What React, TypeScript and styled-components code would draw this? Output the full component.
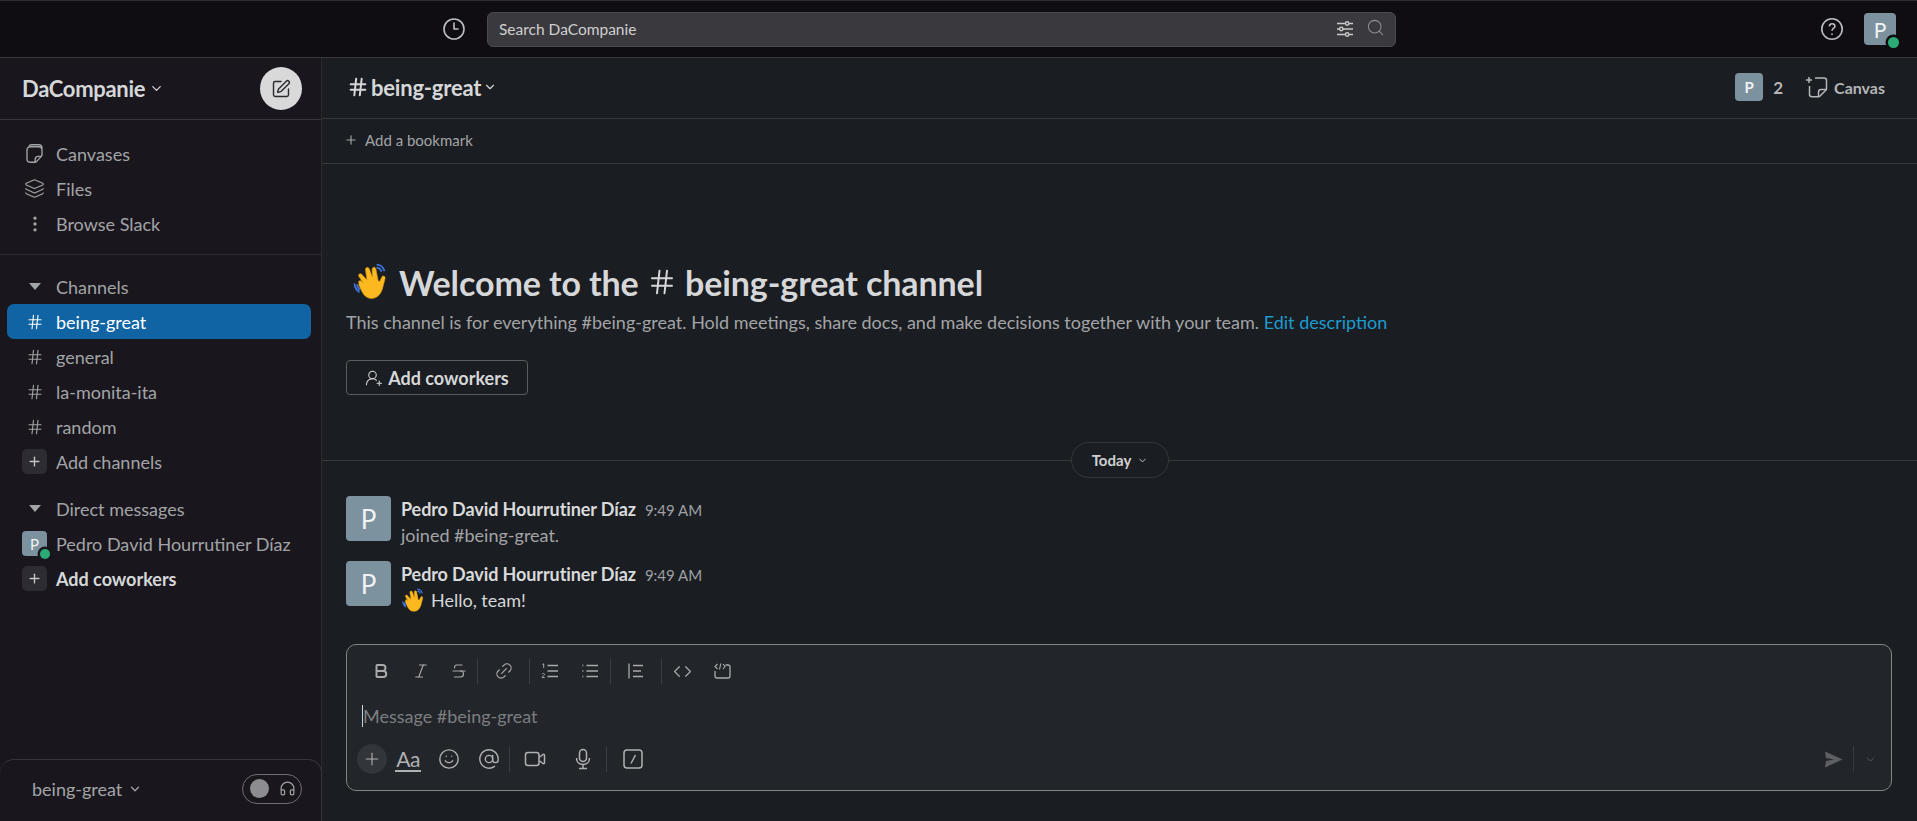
import React from 'react';
import styled, { createGlobalStyle } from 'styled-components';
import {
  AtSign,
  Bold,
  ChevronDown,
  Clock3,
  Code,
  Hash,
  Headphones,
  Italic,
  Layers,
  Link2,
  MoreVertical,
  Plus,
  Search,
  Smile,
  SquarePen,
  Strikethrough,
  UserRoundPlus
} from 'lucide-react';

const border = '#35373b';
const muted = '#a3a4a7';
const bright = '#d6d7d9';
const slate = '#7d929f';

const GlobalStyle = createGlobalStyle`
  html, body { margin: 0; padding: 0; height: 100%; background: #1a1d21; }
  #root { height: 100%; }
  * { box-sizing: border-box; }
  body { font-family: Lato, "Open Sans", sans-serif; color: ${bright}; overflow: hidden; }
`;

const Page = styled.div`
  height: 821px;
  display: flex;
  flex-direction: column;
`;

const TopBar = styled.header`
  height: 58px;
  flex: none;
  display: flex;
  align-items: center;
  background: #0f0d12;
  border-top: 1px solid #2c2b30;
  border-bottom: 1px solid ${border};
  padding-left: 442px;
  padding-right: 21px;
  color: #bdbec0;
`;

const SearchBox = styled.div`
  width: 909px;
  height: 35px;
  margin-left: 21px;
  display: flex;
  align-items: center;
  padding: 0 10px 0 11px;
  background: #3a393e;
  border: 1px solid #4b4a4f;
  border-radius: 6px;
  font-size: 15.5px;
  color: #cfcfd0;
`;

const SearchText = styled.span`
  flex: 1;
`;

const SearchIcons = styled.div`
  display: flex;
  align-items: center;
  gap: 12px;
  color: #c9c9ca;
  & > svg:last-child { color: #8f8f92; margin-top: -3px; }
`;

const TopRight = styled.div`
  margin-left: auto;
  display: flex;
  align-items: center;
  gap: 20px;
`;

const Avatar = styled.div<{ $size: number; $font: number; $radius?: number }>`
  position: relative;
  flex: none;
  width: ${p => p.$size}px;
  height: ${p => p.$size}px;
  display: flex;
  align-items: center;
  justify-content: center;
  background: ${slate};
  border-radius: ${p => p.$radius ?? 4}px;
  color: #f1f3f4;
  font-size: ${p => p.$font}px;
`;

const Presence = styled.span<{ $size: number; $ring: string }>`
  position: absolute;
  right: -3px;
  bottom: -3px;
  width: ${p => p.$size}px;
  height: ${p => p.$size}px;
  border-radius: 50%;
  background: #2bac76;
  box-shadow: 0 0 0 2.5px ${p => p.$ring};
`;

const Body = styled.div`
  flex: 1;
  min-height: 0;
  display: flex;
`;

const Sidebar = styled.aside`
  width: 322px;
  flex: none;
  display: flex;
  flex-direction: column;
  background: #19171d;
  border-right: 1px solid #2b2c30;
`;

const SideHeader = styled.div`
  height: 62px;
  flex: none;
  display: flex;
  align-items: center;
  justify-content: space-between;
  padding: 0 19px 0 22px;
  border-bottom: 1px solid ${border};
`;

const WorkspaceName = styled.div`
  display: flex;
  align-items: center;
  gap: 4px;
  font-size: 22px;
  font-weight: 700;
  letter-spacing: -0.3px;
  color: ${bright};
`;

const ComposeButton = styled.div`
  width: 42px;
  height: 43px;
  display: flex;
  align-items: center;
  justify-content: center;
  border-radius: 50%;
  background: #d9d9da;
  color: #2b2a2f;
`;

const NavGroup = styled.nav`
  padding: 16px 0 13px;
  border-bottom: 1px solid #2c2c31;
`;

const ChannelGroup = styled.div`
  padding-top: 14px;
  display: flex;
  flex-direction: column;
  flex: 1;
`;

const Row = styled.div<{ $active?: boolean; $strong?: boolean; $gapAbove?: number }>`
  height: 35px;
  flex: none;
  margin: ${p => p.$gapAbove ?? 0}px 10px 0 7px;
  padding: 0 10px 0 15px;
  display: flex;
  align-items: center;
  gap: 9px;
  border-radius: 7px;
  font-size: 18px;
  font-weight: ${p => (p.$strong ? 700 : 400)};
  background: ${p => (p.$active ? '#1164a3' : 'transparent')};
  color: ${p => (p.$active ? '#ffffff' : p.$strong ? bright : muted)};
  white-space: nowrap;
`;

const RowIcon = styled.span`
  width: 25px;
  height: 25px;
  flex: none;
  display: flex;
  align-items: center;
  justify-content: center;
`;

const PlusTile = styled(RowIcon)`
  background: #2d2c32;
  border-radius: 5px;
  color: #c5c5c7;
`;

const Caret = styled.span`
  width: 0;
  height: 0;
  border-left: 6.5px solid transparent;
  border-right: 6.5px solid transparent;
  border-top: 7px solid ${muted};
`;

const Ellipsis = styled.span`
  overflow: hidden;
  text-overflow: ellipsis;
`;

const Huddle = styled.footer`
  height: 62px;
  flex: none;
  display: flex;
  align-items: center;
  justify-content: space-between;
  padding: 0 19px 4px 32px;
  border-top: 1px solid #35343a;
  border-right: 1px solid #35343a;
  border-radius: 14px 14px 0 0;
  margin-right: -1px;
  font-size: 18px;
  color: ${muted};
`;

const HuddleName = styled.div`
  display: flex;
  align-items: center;
  gap: 6px;
`;

const HuddleToggle = styled.div`
  width: 60px;
  height: 30px;
  display: flex;
  align-items: center;
  justify-content: space-between;
  padding: 0 5px 0 7px;
  border: 1px solid #6f6e73;
  border-radius: 15px;
`;

const HuddleKnob = styled.span`
  width: 19px;
  height: 19px;
  border-radius: 50%;
  background: #8d8c91;
`;

const Main = styled.main`
  flex: 1;
  min-width: 0;
  display: flex;
  flex-direction: column;
  background: #1a1d21;
`;

const ChannelHeader = styled.div`
  height: 61px;
  flex: none;
  display: flex;
  align-items: center;
  justify-content: space-between;
  padding: 0 32px 2px 25px;
  border-bottom: 1px solid ${border};
`;

const ChannelTitle = styled.div`
  display: flex;
  align-items: center;
  gap: 2px;
  font-size: 22px;
  font-weight: 700;
  letter-spacing: -0.2px;
`;

const HeaderActions = styled.div`
  display: flex;
  align-items: center;
  font-size: 16px;
  font-weight: 700;
  color: #b5b6b8;
`;

const MemberCount = styled.span`
  margin: 0 22px 0 10px;
  font-size: 17px;
`;

const CanvasLabel = styled.span`
  margin-left: 5px;
`;

const BookmarkBar = styled.div`
  height: 45px;
  flex: none;
  display: flex;
  align-items: center;
  gap: 7px;
  padding: 0 0 2px 22px;
  border-bottom: 1px solid ${border};
  font-size: 15px;
  color: ${muted};
`;

const Feed = styled.section`
  flex: 1;
  min-height: 0;
  display: flex;
  flex-direction: column;
  justify-content: flex-end;
  padding-bottom: 18px;
`;

const Welcome = styled.div`
  padding: 0 24px;
`;

const WelcomeTitle = styled.h1`
  margin: 0;
  height: 44px;
  display: flex;
  align-items: center;
  gap: 9px;
  font-size: 34px;
  font-weight: 700;
  letter-spacing: -0.1px;
  padding-left: 6px;
`;

const TitleWords = styled.span`
  display: inline-flex;
  align-items: center;
  white-space: pre;
`;

const Description = styled.p`
  margin: 5px 0 0;
  font-size: 18px;
  line-height: 26px;
  color: ${muted};
`;

const EditLink = styled.span`
  color: #1d9bd1;
`;

const AddCoworkersButton = styled.div`
  width: 182px;
  height: 35px;
  margin-top: 25px;
  display: flex;
  align-items: center;
  justify-content: center;
  gap: 5px;
  border: 1px solid #5a5c5f;
  border-radius: 4px;
  font-size: 18px;
  font-weight: 700;
  color: ${bright};
`;

const DayDivider = styled.div`
  position: relative;
  height: 1px;
  margin: 65px 0 35px;
  background: ${border};
`;

const DayPill = styled.div`
  position: absolute;
  left: 749px;
  top: -18px;
  width: 98px;
  height: 36px;
  display: flex;
  align-items: center;
  justify-content: center;
  gap: 6px;
  background: #1a1d21;
  border: 1px solid ${border};
  border-radius: 18px;
  font-size: 15px;
  font-weight: 700;
  color: #cfd0d2;
`;

const Message = styled.article`
  display: flex;
  gap: 10px;
  padding: 0 24px;
  height: 65px;
`;

const MessageBody = styled.div`
  padding-top: 1px;
`;

const MessageMeta = styled.div`
  display: flex;
  align-items: baseline;
  gap: 9px;
  height: 25px;
  line-height: 25px;
`;

const Author = styled.span`
  font-size: 18px;
  font-weight: 700;
  letter-spacing: -0.1px;
  color: #d9dadb;
`;

const Time = styled.span`
  font-size: 15px;
  color: #9fa0a3;
`;

const MessageText = styled.div<{ $dim?: boolean }>`
  display: flex;
  align-items: center;
  gap: 5px;
  font-size: 18px;
  line-height: 27px;
  color: ${p => (p.$dim ? muted : bright)};
`;

const Composer = styled.div`
  flex: none;
  height: 147px;
  margin: 0 25px 30px 24px;
  display: flex;
  flex-direction: column;
  background: #222529;
  border: 1px solid #818385;
  border-radius: 10px;
`;

const FormatBar = styled.div`
  height: 42px;
  margin-top: 5px;
  display: flex;
  align-items: center;
  padding-left: 14px;
  color: #a9aaac;
`;

const ToolSlot = styled.span<{ $width?: number }>`
  width: ${p => p.$width ?? 40}px;
  height: 26px;
  flex: none;
  display: flex;
  align-items: center;
  justify-content: center;
`;

const ToolRule = styled.span`
  width: 1px;
  height: 25px;
  flex: none;
  background: #3b3e42;
`;

const Placeholder = styled.div`
  height: 36px;
  margin-top: 6px;
  padding-left: 15px;
  display: flex;
  align-items: center;
  font-size: 18px;
  color: #7c7e81;
`;

const TextCursor = styled.span`
  width: 1px;
  height: 22px;
  background: #d1d2d3;
`;

const ActionBar = styled.div`
  flex: 1;
  display: flex;
  align-items: center;
  padding: 0 14px 6px 10px;
  color: #b0b1b3;
`;

const AttachButton = styled.span`
  width: 30px;
  height: 30px;
  margin-right: 6px;
  flex: none;
  display: flex;
  align-items: center;
  justify-content: center;
  border-radius: 50%;
  background: #323539;
`;

const FontToggle = styled.span`
  width: 26px;
  margin: 0 8px 0 2px;
  border-bottom: 2px solid #b0b1b3;
  font-size: 21px;
  line-height: 23px;
  text-align: center;
  letter-spacing: -0.6px;
`;

const SendGroup = styled.div`
  margin-left: auto;
  display: flex;
  align-items: center;
  gap: 10px;
  color: #5d5f62;
`;

const SendRule = styled.span`
  width: 1px;
  height: 26px;
  background: #36393d;
`;

const CanvasesIcon = () => (
  <svg width="22" height="22" viewBox="0 0 22 22" fill="none" stroke="currentColor" strokeWidth="1.4">
    <path d="M5 3.2c.5-1 1.3-1.4 2.4-1.4h7.2c2.2 0 3.4 1.2 3.4 3.4" />
    <path d="M3 7.2C3 5 4.2 3.8 6.4 3.8h8.2c2.2 0 3.4 1.2 3.4 3.4v4.6c0 .7-.2 1.1-.7 1.6l-4.8 5.2c-.5.5-1 .7-1.7.7H6.4c-2.2 0-3.4-1.2-3.4-3.4z" />
    <path d="M11.2 19.6v-3.2c0-2 1-3 3-3h3.4" />
  </svg>
);

const HuddleHeadphones = () => <Headphones size={17} strokeWidth={1.7} />;

const FilterIcon = () => (
  <svg width="18" height="18" viewBox="0 0 18 18" fill="none" stroke="currentColor" strokeWidth="1.4">
    <path d="M1 3.5h8.4M13 3.5h4M1 9h2.6M7 9h10M1 14.5h8.4M13 14.5h4" />
    <circle cx="11.2" cy="3.5" r="1.7" />
    <circle cx="5.3" cy="9" r="1.7" />
    <circle cx="11.2" cy="14.5" r="1.7" />
  </svg>
);

const CanvasAddIcon = () => (
  <svg width="24" height="24" viewBox="0 0 24 24" fill="none" stroke="currentColor" strokeWidth="1.5">
    <path d="M4 2v6M1 5h6" />
    <path d="M10 3h9c1.6 0 2.5.9 2.5 2.5v8.3c0 .5-.2.9-.5 1.2l-6.200 6.200c-.3.3-.7.5-1.200.5H7c-1.600 0-2.500-.9-2.500-2.500V11" />
    <path d="M13.500 21.500v-4.500c0-1.500.9-2.500 2.500-2.500h5.500" />
  </svg>
);

const OrderedListIcon = () => (
  <svg width="18" height="18" viewBox="0 0 18 18" fill="none" stroke="currentColor" strokeWidth="1.3">
    <path d="M6.500 3.500H17M6.500 9H17M6.500 14.500H17" />
    <path d="M1.500 2.500 2.700 1.800V6" strokeWidth="1" />
    <path d="M1 12.200c.4-1 2.500-1 2.500.3 0 1-1.700 1.500-2.500 3h2.700" strokeWidth="1" />
  </svg>
);

const BulletListIcon = () => (
  <svg width="18" height="18" viewBox="0 0 18 18" fill="none" stroke="currentColor" strokeWidth="1.3">
    <path d="M5.500 3.500H17M5.500 9H17M5.500 14.500H17" />
    <path d="M1.500 3.500h.8M1.500 9h.8M1.500 14.500h.8" strokeWidth="1.800" />
  </svg>
);

const QuoteIcon = () => (
  <svg width="18" height="18" viewBox="0 0 18 18" fill="none" stroke="currentColor" strokeWidth="1.3">
    <path d="M2 1.500v15M6 3.500h10M6 9h8M6 14.500h10" />
  </svg>
);

const CodeBlockIcon = () => (
  <svg width="19" height="19" viewBox="0 0 19 19" fill="none" stroke="currentColor" strokeWidth="1.3">
    <path d="M2 9v5c0 1.300.7 2 2 2h11c1.300 0 2-.7 2-2V5c0-1.300-.7-2-2-2h-2.500" />
    <path d="M4.500 2 2 4.500 4.500 7M10 2 12 4.500 10 7M7.800 1.500 6.500 7.500" strokeWidth="1.100" />
  </svg>
);

const VideoIcon = () => (
  <svg width="22" height="22" viewBox="0 0 22 22" fill="none" stroke="currentColor" strokeWidth="1.5">
    <rect x="1.500" y="4.500" width="13.500" height="13" rx="2.500" />
    <path d="M15 9.500 19 6.500c.7-.5 1.500 0 1.500.8v7.400c0 .8-.8 1.300-1.500.8L15 12.500" />
  </svg>
);

const MicIcon = () => (
  <svg width="22" height="22" viewBox="0 0 22 22" fill="none" stroke="currentColor" strokeWidth="1.5">
    <rect x="7.500" y="1.500" width="7" height="12" rx="3.500" />
    <path d="M4.500 10c0 4 2.800 6.500 6.500 6.500s6.500-2.500 6.500-6.500M11 16.500v4M7 20.500h8" />
  </svg>
);

const SlashIcon = () => (
  <svg width="22" height="22" viewBox="0 0 22 22" fill="none" stroke="currentColor" strokeWidth="1.500">
    <rect x="2" y="2" width="18" height="18" rx="3" />
    <path d="M13.500 7 9 15.500" />
  </svg>
);

const SendIcon = () => (
  <svg width="19" height="19" viewBox="0 0 19 19" fill="currentColor">
    <path d="M1 1.500 18.500 9.500 1 17.500 2 11 10 9.500 2 8z" />
  </svg>
);

const WaveEmoji = ({ size }: { size: number }) => (
  <svg width={size} height={size} viewBox="0 0 36 36" fill="none">
    <path
      d="M7 20c-1.500-2-.3-4 1.500-3l2 1.800L6.700 13c-1.300-2 .8-3.800 2.500-2.300l5 5.500-1.400-9.700c-.3-2.500 2.500-3.200 3.500-1l3 8-.2-7.500c0-2.400 3-2.700 3.500-.4l2 10.400c.5 2 1.700 1.600 2.300.3l1.400-3c1-2 3.600-.8 3 1.300l-2 8c-1.500 7-5.500 11-11 11-6 0-9-5.500-12-13.600z"
      fill="#fbb91f"
      stroke="#e89c0c"
      strokeWidth="0.6"
    />
    <path d="M2.500 20c.3 3 1.700 5.500 4 7.300M5 21c.3 1.600 1 3 2 4" stroke="#3e71d8" strokeWidth="1.800" strokeLinecap="round" />
    <path d="M24 1.500c3 .4 5.500 2.500 6.500 5.500M24 4.500c1.600.3 3 1.400 3.700 3" stroke="#3e71d8" strokeWidth="1.800" strokeLinecap="round" />
  </svg>
);

const StatusAvatar = ({ ring }: { ring: string }) => (
  <Avatar $size={25} $font={15}>
    P
    <Presence $size={10} $ring={ring} />
  </Avatar>
);

const channels = ['being-great', 'general', 'la-monita-ita', 'random'];

const App = () => (
  <Page>
    <GlobalStyle />
    <TopBar>
      <Clock3 size={24} strokeWidth={1.6} />
      <SearchBox>
        <SearchText>Search DaCompanie</SearchText>
        <SearchIcons>
          <FilterIcon />
          <Search size={19} strokeWidth={1.3} />
        </SearchIcons>
      </SearchBox>
      <TopRight>
        <svg width="24" height="24" viewBox="0 0 24 24" fill="none" stroke="currentColor" strokeWidth="1.600">
          <circle cx="12" cy="12" r="10.200" />
          <path d="M9.300 9.300c.2-1.700 1.300-2.500 2.800-2.500 1.600 0 2.800 1 2.800 2.400 0 2.200-2.900 2.300-2.900 4.500" />
          <path d="M12 16.400v1.400" strokeWidth="1.900" />
        </svg>
        <Avatar $size={32} $font={21}>
          P
          <Presence $size={11} $ring="#0f0d12" />
        </Avatar>
      </TopRight>
    </TopBar>
    <Body>
      <Sidebar>
        <SideHeader>
          <WorkspaceName>
            DaCompanie
            <ChevronDown size={15} strokeWidth={2} />
          </WorkspaceName>
          <ComposeButton>
            <SquarePen size={20} strokeWidth={1.7} />
          </ComposeButton>
        </SideHeader>
        <NavGroup>
          <Row>
            <RowIcon><CanvasesIcon /></RowIcon>
            Canvases
          </Row>
          <Row>
            <RowIcon><Layers size={21} strokeWidth={1.3} /></RowIcon>
            Files
          </Row>
          <Row>
            <RowIcon><MoreVertical size={20} strokeWidth={2} /></RowIcon>
            Browse Slack
          </Row>
        </NavGroup>
        <ChannelGroup>
          <Row>
            <RowIcon><Caret /></RowIcon>
            Channels
          </Row>
          {channels.map((name, i) => (
            <Row key={name} $active={i === 0}>
              <RowIcon><Hash size={18} strokeWidth={1.5} /></RowIcon>
              {name}
            </Row>
          ))}
          <Row>
            <PlusTile><Plus size={15} strokeWidth={2.2} /></PlusTile>
            Add channels
          </Row>
          <Row $gapAbove={12}>
            <RowIcon><Caret /></RowIcon>
            Direct messages
          </Row>
          <Row>
            <StatusAvatar ring="#19171d" />
            <Ellipsis>Pedro David Hourrutiner Díaz</Ellipsis>
          </Row>
          <Row $strong>
            <PlusTile><Plus size={15} strokeWidth={2.2} /></PlusTile>
            Add coworkers
          </Row>
        </ChannelGroup>
        <Huddle>
          <HuddleName>
            being-great
            <ChevronDown size={14} strokeWidth={2.2} />
          </HuddleName>
          <HuddleToggle>
            <HuddleKnob />
            <HuddleHeadphones />
          </HuddleToggle>
        </Huddle>
      </Sidebar>
      <Main>
        <ChannelHeader>
          <ChannelTitle>
            <Hash size={22} strokeWidth={2.2} />
            being-great
            <ChevronDown size={14} strokeWidth={2} />
          </ChannelTitle>
          <HeaderActions>
            <Avatar $size={28} $font={15}>P</Avatar>
            <MemberCount>2</MemberCount>
            <CanvasAddIcon />
            <CanvasLabel>Canvas</CanvasLabel>
          </HeaderActions>
        </ChannelHeader>
        <BookmarkBar>
          <Plus size={14} strokeWidth={2} />
          Add a bookmark
        </BookmarkBar>
        <Feed>
          <Welcome>
            <WelcomeTitle>
              <WaveEmoji size={38} />
              <TitleWords>
                Welcome to the <Hash size={30} strokeWidth={1.6} /> being-great channel
              </TitleWords>
            </WelcomeTitle>
            <Description>
              This channel is for everything #being-great. Hold meetings, share docs, and make decisions together with your team.{' '}
              <EditLink>Edit description</EditLink>
            </Description>
            <AddCoworkersButton>
              <UserRoundPlus size={18} strokeWidth={1.4} />
              Add coworkers
            </AddCoworkersButton>
          </Welcome>
          <DayDivider>
            <DayPill>
              Today
              <ChevronDown size={11} strokeWidth={2} />
            </DayPill>
          </DayDivider>
          <Message>
            <Avatar $size={45} $font={26}>P</Avatar>
            <MessageBody>
              <MessageMeta>
                <Author>Pedro David Hourrutiner Díaz</Author>
                <Time>9:49 AM</Time>
              </MessageMeta>
              <MessageText $dim>joined #being-great.</MessageText>
            </MessageBody>
          </Message>
          <Message>
            <Avatar $size={45} $font={26}>P</Avatar>
            <MessageBody>
              <MessageMeta>
                <Author>Pedro David Hourrutiner Díaz</Author>
                <Time>9:49 AM</Time>
              </MessageMeta>
              <MessageText>
                <WaveEmoji size={25} />
                Hello, team!
              </MessageText>
            </MessageBody>
          </Message>
        </Feed>
        <Composer>
          <FormatBar>
            <ToolSlot><Bold size={18} strokeWidth={2.6} /></ToolSlot>
            <ToolSlot><Italic size={18} strokeWidth={1.5} /></ToolSlot>
            <ToolSlot $width={36}><Strikethrough size={18} strokeWidth={1.5} /></ToolSlot>
            <ToolRule />
            <ToolSlot $width={51}><Link2 size={20} strokeWidth={1.4} style={{ transform: 'rotate(-45deg)' }} /></ToolSlot>
            <ToolRule />
            <ToolSlot><OrderedListIcon /></ToolSlot>
            <ToolSlot><BulletListIcon /></ToolSlot>
            <ToolRule />
            <ToolSlot $width={50}><QuoteIcon /></ToolSlot>
            <ToolRule />
            <ToolSlot><Code size={19} strokeWidth={1.5} /></ToolSlot>
            <ToolSlot><CodeBlockIcon /></ToolSlot>
          </FormatBar>
          <Placeholder>
            <TextCursor />
            Message #being-great
          </Placeholder>
          <ActionBar>
            <AttachButton><Plus size={20} strokeWidth={1.3} /></AttachButton>
            <FontToggle>Aa</FontToggle>
            <ToolSlot><Smile size={22} strokeWidth={1.5} /></ToolSlot>
            <ToolSlot><AtSign size={22} strokeWidth={1.5} /></ToolSlot>
            <ToolRule />
            <ToolSlot $width={50}><VideoIcon /></ToolSlot>
            <ToolSlot $width={46}><MicIcon /></ToolSlot>
            <ToolRule />
            <ToolSlot $width={52}><SlashIcon /></ToolSlot>
            <SendGroup>
              <SendIcon />
              <SendRule />
              <ChevronDown size={13} strokeWidth={1.5} />
            </SendGroup>
          </ActionBar>
        </Composer>
      </Main>
    </Body>
  </Page>
);

export default App;
